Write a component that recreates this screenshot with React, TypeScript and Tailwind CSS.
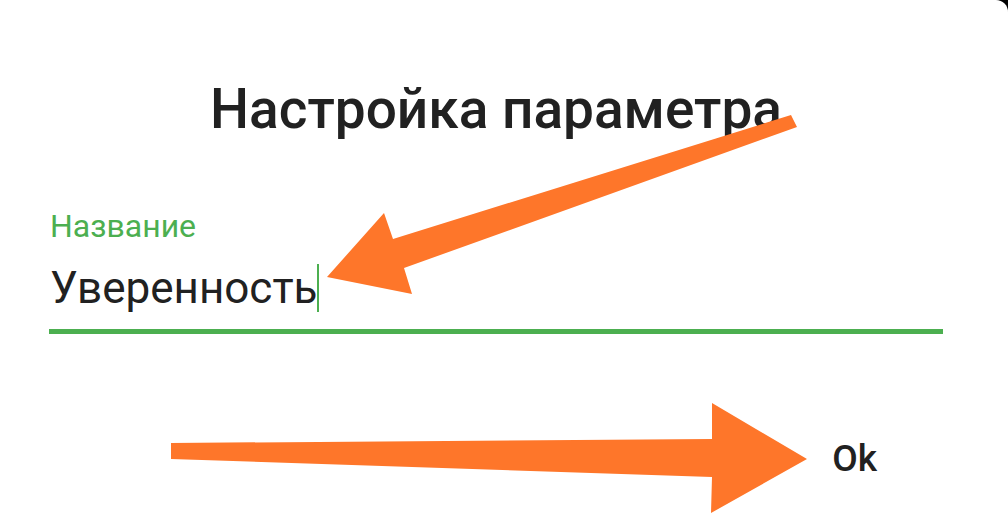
import React from "react";

const Arrows = () => (
  <svg
    className="absolute inset-0 pointer-events-none"
    width="1008"
    height="527"
    viewBox="0 0 1008 527"
  >
    <polygon
      fill="#fe762a"
      points="327,277 384,213 393,239 791,115 797,127 404,268 412,294"
    />
    <polygon
      fill="#fe762a"
      points="171,443 712,439 712,403 807,459 711,513 712,477 171,459"
    />
  </svg>
);

export default function App() {
  return (
    <div className="w-[1008px] h-[527px] bg-black overflow-hidden">
      <div className="relative w-full h-full bg-white rounded-tr-[12px] font-['Roboto',sans-serif] text-[#212121]">
        <div className="flex flex-col pt-[77px] pl-[49px] pr-[65px]">
          <h1 className="text-center text-[55px] leading-[64px] font-medium">
            Настройка параметра
          </h1>
          <label className="mt-[68px] text-[32px] leading-[34px] text-[#4caf50] pl-px">
            Название
          </label>
          <div className="mt-[19px] flex items-center h-[52px] text-[44px] leading-[52px] pl-px">
            <span>Уверенность</span>
            <span className="inline-block w-[2px] h-[48px] bg-[#4caf50]" />
          </div>
          <div className="mt-[15px] h-[5px] bg-[#4caf50]" />
          <div className="mt-[103px] flex justify-end pr-[66px]">
            <button
              type="button"
              className="text-[37px] leading-[44px] font-medium text-[#212121]"
            >
              Ok
            </button>
          </div>
        </div>
        <Arrows />
      </div>
    </div>
  );
}
